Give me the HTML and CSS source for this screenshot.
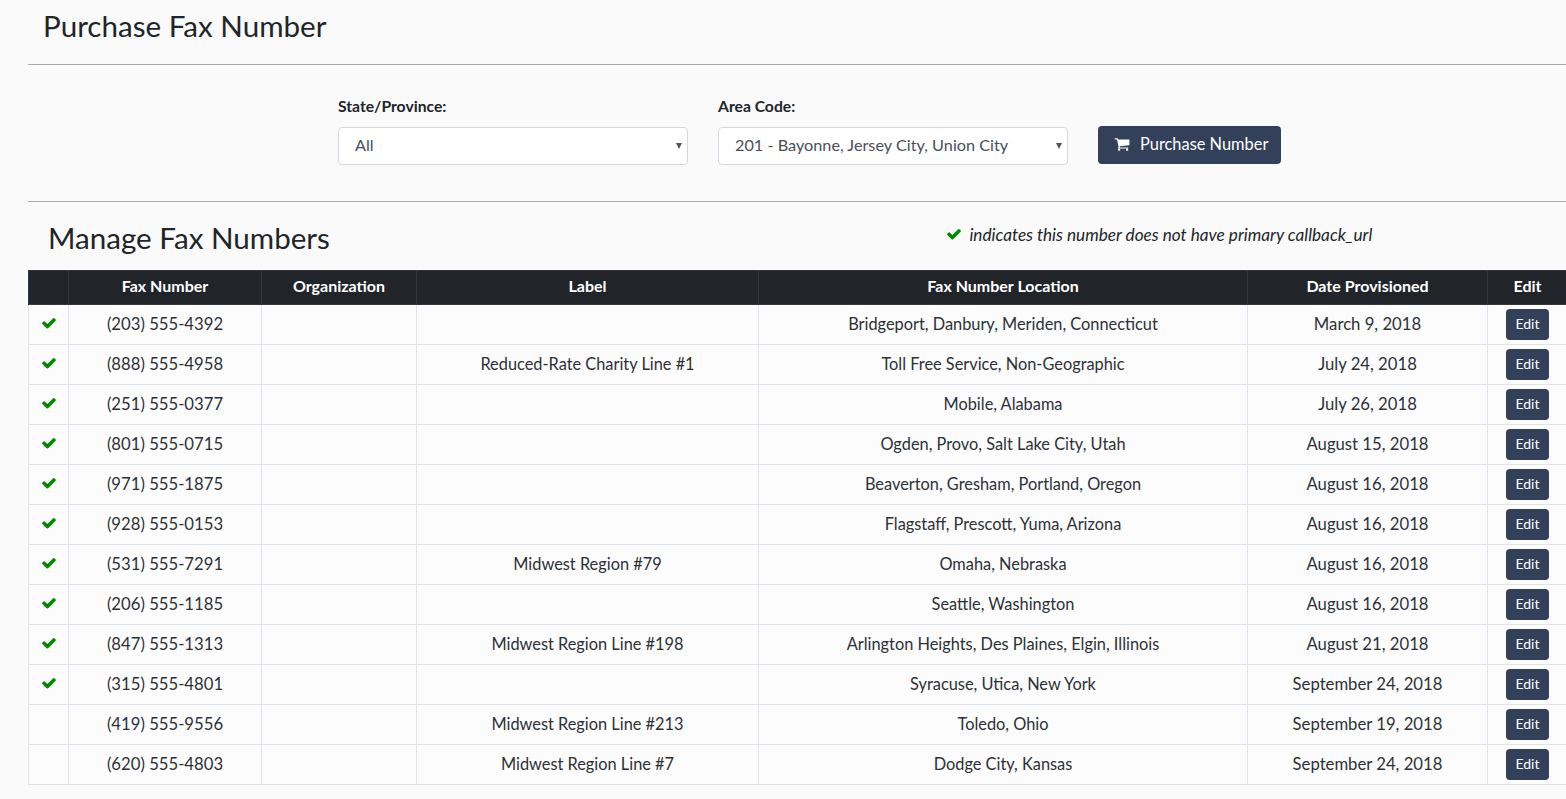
FILE: index.html
```html
<!DOCTYPE html>
<html lang="en">
<head>
  <meta charset="UTF-8">
  <title>Purchase Fax Number</title>
  <link rel="stylesheet" href="styles.css">
</head>
<body>
  <svg class="defs" width="0" height="0">
    <symbol id="icon-check" viewBox="0 0 1792 1792"><path d="M1671 566q0 40-28 68l-724 724-136 136q-28 28-68 28t-68-28l-136-136-362-362q-28-28-28-68t28-68l136-136q28-28 68-28t68 28l294 295 656-657q28-28 68-28t68 28l136 136q28 28 28 68z"/></symbol>
    <symbol id="icon-cart" viewBox="0 0 1792 1792"><path d="M704 1536q0 52-38 90t-90 38-90-38-38-90 38-90 90-38 90 38 38 90zm896 0q0 52-38 90t-90 38-90-38-38-90 38-90 90-38 90 38 38 90zm128-1088v512q0 24-16.5 42.5t-40.5 21.5l-1044 122q13 60 13 70 0 16-24 64h920q26 0 45 19t19 45-19 45-45 19h-1024q-26 0-45-19t-19-45q0-11 8-31.5t16-36 21.5-40 15.5-29.5l-177-823h-204q-26 0-45-19t-19-45 19-45 45-19h256q16 0 28.5 6.5t19.5 15.5 13 24.5 8 26 5.5 29.5 4.5 26h1201q26 0 45 19t19 45z"/></symbol>
  </svg>

  <div class="container">
    <h2 class="page-title">Purchase Fax Number</h2>
    <hr>

    <form class="purchase-form">
      <div class="field">
        <label for="state">State/Province:</label>
        <div class="select-wrap">
          <select id="state"><option>All</option></select>
        </div>
      </div>
      <div class="field">
        <label for="area">Area Code:</label>
        <div class="select-wrap">
          <select id="area"><option>201 - Bayonne, Jersey City, Union City</option></select>
        </div>
      </div>
      <button type="button" class="btn btn-purchase">
        <svg class="icon-cart"><use href="#icon-cart"/></svg>
        Purchase Number
      </button>
    </form>
    <hr>

    <div class="manage-head">
      <h2 class="manage-title">Manage Fax Numbers</h2>
      <p class="legend"><svg class="icon-check"><use href="#icon-check"/></svg> <em>indicates this number does not have primary callback_url</em></p>
    </div>

    <table>
      <colgroup>
        <col class="col-check">
        <col class="col-number">
        <col class="col-org">
        <col class="col-label">
        <col class="col-location">
        <col class="col-date">
        <col class="col-edit">
      </colgroup>
      <thead>
        <tr>
          <th></th>
          <th>Fax Number</th>
          <th>Organization</th>
          <th>Label</th>
          <th>Fax Number Location</th>
          <th>Date Provisioned</th>
          <th>Edit</th>
        </tr>
      </thead>
      <tbody>
        <tr>
          <td><svg class="icon-check"><use href="#icon-check"/></svg></td>
          <td>(203) 555-4392</td><td></td><td></td>
          <td>Bridgeport, Danbury, Meriden, Connecticut</td>
          <td>March 9, 2018</td>
          <td><button type="button" class="btn btn-edit">Edit</button></td>
        </tr>
        <tr>
          <td><svg class="icon-check"><use href="#icon-check"/></svg></td>
          <td>(888) 555-4958</td><td></td><td>Reduced-Rate Charity Line #1</td>
          <td>Toll Free Service, Non-Geographic</td>
          <td>July 24, 2018</td>
          <td><button type="button" class="btn btn-edit">Edit</button></td>
        </tr>
        <tr>
          <td><svg class="icon-check"><use href="#icon-check"/></svg></td>
          <td>(251) 555-0377</td><td></td><td></td>
          <td>Mobile, Alabama</td>
          <td>July 26, 2018</td>
          <td><button type="button" class="btn btn-edit">Edit</button></td>
        </tr>
        <tr>
          <td><svg class="icon-check"><use href="#icon-check"/></svg></td>
          <td>(801) 555-0715</td><td></td><td></td>
          <td>Ogden, Provo, Salt Lake City, Utah</td>
          <td>August 15, 2018</td>
          <td><button type="button" class="btn btn-edit">Edit</button></td>
        </tr>
        <tr>
          <td><svg class="icon-check"><use href="#icon-check"/></svg></td>
          <td>(971) 555-1875</td><td></td><td></td>
          <td>Beaverton, Gresham, Portland, Oregon</td>
          <td>August 16, 2018</td>
          <td><button type="button" class="btn btn-edit">Edit</button></td>
        </tr>
        <tr>
          <td><svg class="icon-check"><use href="#icon-check"/></svg></td>
          <td>(928) 555-0153</td><td></td><td></td>
          <td>Flagstaff, Prescott, Yuma, Arizona</td>
          <td>August 16, 2018</td>
          <td><button type="button" class="btn btn-edit">Edit</button></td>
        </tr>
        <tr>
          <td><svg class="icon-check"><use href="#icon-check"/></svg></td>
          <td>(531) 555-7291</td><td></td><td>Midwest Region #79</td>
          <td>Omaha, Nebraska</td>
          <td>August 16, 2018</td>
          <td><button type="button" class="btn btn-edit">Edit</button></td>
        </tr>
        <tr>
          <td><svg class="icon-check"><use href="#icon-check"/></svg></td>
          <td>(206) 555-1185</td><td></td><td></td>
          <td>Seattle, Washington</td>
          <td>August 16, 2018</td>
          <td><button type="button" class="btn btn-edit">Edit</button></td>
        </tr>
        <tr>
          <td><svg class="icon-check"><use href="#icon-check"/></svg></td>
          <td>(847) 555-1313</td><td></td><td>Midwest Region Line #198</td>
          <td>Arlington Heights, Des Plaines, Elgin, Illinois</td>
          <td>August 21, 2018</td>
          <td><button type="button" class="btn btn-edit">Edit</button></td>
        </tr>
        <tr>
          <td><svg class="icon-check"><use href="#icon-check"/></svg></td>
          <td>(315) 555-4801</td><td></td><td></td>
          <td>Syracuse, Utica, New York</td>
          <td>September 24, 2018</td>
          <td><button type="button" class="btn btn-edit">Edit</button></td>
        </tr>
        <tr>
          <td></td>
          <td>(419) 555-9556</td><td></td><td>Midwest Region Line #213</td>
          <td>Toledo, Ohio</td>
          <td>September 19, 2018</td>
          <td><button type="button" class="btn btn-edit">Edit</button></td>
        </tr>
        <tr>
          <td></td>
          <td>(620) 555-4803</td><td></td><td>Midwest Region Line #7</td>
          <td>Dodge City, Kansas</td>
          <td>September 24, 2018</td>
          <td><button type="button" class="btn btn-edit">Edit</button></td>
        </tr>
      </tbody>
    </table>
  </div>
</body>
</html>
```

FILE: styles.css
```css
html, body {
  overflow: hidden;
}

body {
  margin: 0;
  background-color: #fafafa;
  color: #212529;
  font-family: Lato, "Open Sans", sans-serif;
  font-size: 16.35px;
}

.defs {
  display: block;
  height: 0;
}

.container {
  padding-left: 28px;
  width: 1539px;
}

h2 {
  margin: 0;
  font-weight: 400;
  font-size: 29.6px;
  line-height: 34px;
}

.page-title {
  padding: 9px 0 0 15px;
  height: 64px;
  box-sizing: border-box;
}

hr {
  margin: 0;
  border: 0;
  border-top: 1px solid #a8a8a8;
}

.purchase-form {
  display: flex;
  align-items: flex-start;
  gap: 30px;
  height: 136px;
  padding: 29px 0 0 310px;
  box-sizing: border-box;
}

.field {
  width: 350px;
}

label {
  display: block;
  height: 33px;
  font-weight: 700;
  font-size: 15.7px;
  line-height: 24px;
}

.select-wrap {
  position: relative;
}

.select-wrap::after {
  content: "";
  position: absolute;
  right: 6px;
  top: 16px;
  border-top: 6px solid #555;
  border-left: 3px solid transparent;
  border-right: 3px solid transparent;
}

select {
  display: block;
  width: 100%;
  height: 38px;
  padding: 0 16px 3px;
  border: 1px solid #d5d8e4;
  border-radius: 4px;
  background: #fff;
  color: #495057;
  font: inherit;
  font-size: 16.25px;
  appearance: none;
}

.btn {
  border: 0;
  border-radius: 4px;
  background-color: #32405a;
  color: #fff;
  font-family: inherit;
}

.btn-purchase {
  display: flex;
  align-items: center;
  height: 38px;
  margin-top: 32px;
  padding: 0 13px 3px 16px;
  font-size: 16.4px;
}

.icon-cart {
  width: 16px;
  height: 16px;
  margin-right: 10px;
  fill: #fff;
}

.icon-check {
  width: 16px;
  height: 16px;
  fill: #008a00;
  vertical-align: -1px;
}

.manage-head {
  display: flex;
  height: 68px;
}

.manage-title {
  width: 918px;
  padding: 19px 0 0 20px;
  box-sizing: border-box;
}

.legend {
  margin: 22px 0 0;
  font-size: 17.2px;
}

.legend em {
  margin-left: 3px;
}

table {
  width: 1539px;
  table-layout: fixed;
  border-collapse: collapse;
  text-align: center;
}

.col-check { width: 40px; }
.col-number { width: 193px; }
.col-org { width: 155px; }
.col-label { width: 342px; }
.col-location { width: 489px; }
.col-date { width: 240px; }
.col-edit { width: 80px; }

th {
  height: 34px;
  padding: 0 0 4px;
  box-sizing: border-box;
  border: 1px solid #32383e;
  background-color: #212529;
  color: #fff;
  font-weight: 700;
  font-size: 16px;
}

td {
  height: 37px;
  padding: 0 0 2px;
  border: 1px solid #dee2ec;
  background-color: #fcfcfd;
  color: #2c3136;
}

td:nth-child(2),
td:nth-child(6) {
  font-size: 16.7px;
}

.btn-edit {
  width: 43px;
  height: 31px;
  margin-top: 2px;
  padding: 0 0 2px;
  font-size: 14px;
  vertical-align: middle;
}
```
